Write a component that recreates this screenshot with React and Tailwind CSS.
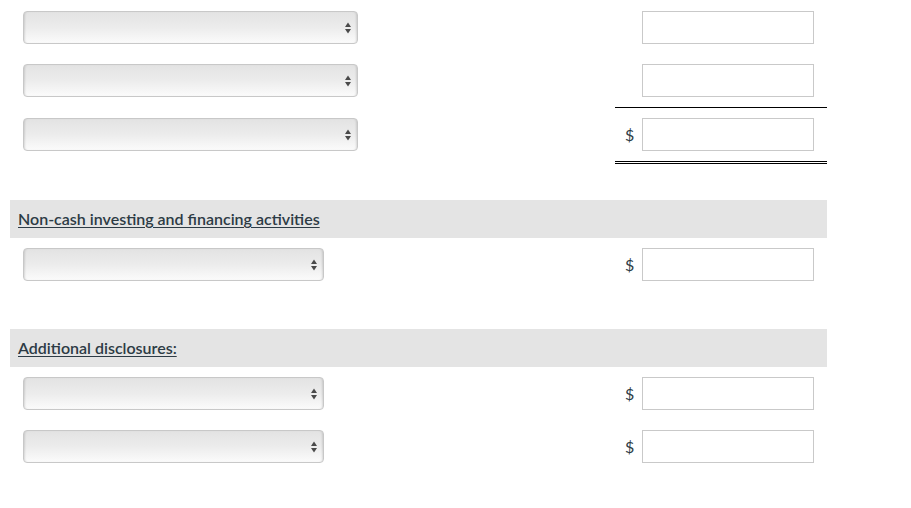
const Arrows = () => (
  <svg width="8" height="12" viewBox="0 0 8 12" className="shrink-0">
    <path d="M4 0.5 L7 5 L1 5 Z" fill="#4a4a4a" />
    <path d="M4 11.5 L7 7 L1 7 Z" fill="#4a4a4a" />
  </svg>
);

const Select = ({ wide }) => (
  <div
    className={`flex h-[33px] items-center justify-end rounded-[4px] border border-[#c8c8c8] bg-gradient-to-b from-[#e3e3e3] via-[#ececec] to-[#fbfbfb] pr-[5px] shadow-[inset_2px_0_2px_-1px_rgba(0,0,0,0.12),inset_-2px_0_2px_-1px_rgba(0,0,0,0.12)] ${
      wide ? "w-[335px]" : "w-[301px]"
    }`}
  >
    <Arrows />
  </div>
);

const Amount = ({ dollar }) => (
  <div className="flex items-center">
    <span className="w-[27px] pl-[10px] text-[16px] text-[#2d3b45]">{dollar ? "$" : ""}</span>
    <div className="h-[33px] w-[172px] border border-[#c9c9c9] bg-white" />
  </div>
);

const Row = ({ wide, dollar, rightClass = "", className = "" }) => (
  <div className={`flex ${className}`}>
    <div className="flex flex-1 items-start pl-[13px] pt-[10px]">
      <Select wide={wide} />
    </div>
    <div className={`w-[212px] pt-[10px] pb-[10px] ${rightClass}`}>
      <Amount dollar={dollar} />
    </div>
  </div>
);

const Band = ({ children }) => (
  <div className="flex h-[38px] items-center bg-[#e4e4e4] pl-[8px]">
    <span className="text-[16px] font-semibold text-[#2d3b45] underline underline-offset-[2px]">{children}</span>
  </div>
);

export default function App() {
  return (
    <div className="min-h-screen bg-white" style={{ fontFamily: "Lato, 'Open Sans', sans-serif" }}>
      <div className="ml-[10px] w-[817px]">
        <Row wide className="pt-[1px]" />
        <Row wide rightClass="border-b border-black" />
        <Row wide dollar rightClass="border-b-[3px] border-double border-black" />

        <div className="mt-[36px]">
          <Band>Non-cash investing and financing activities</Band>
        </div>
        <Row dollar />

        <div className="mt-[38px]">
          <Band>Additional disclosures:</Band>
        </div>
        <Row dollar />
        <Row dollar />
      </div>
    </div>
  );
}
